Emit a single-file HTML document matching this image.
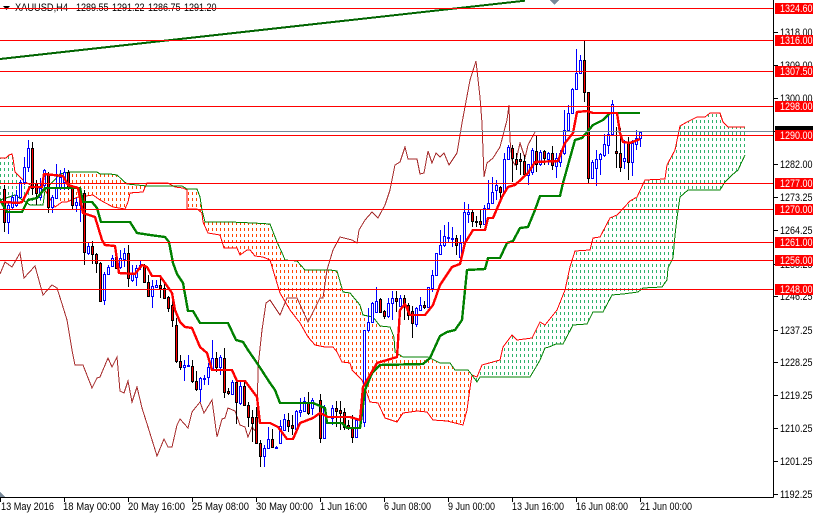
<!DOCTYPE html>
<html><head><meta charset="utf-8"><style>
html,body{margin:0;padding:0;background:#fff;width:814px;height:514px;overflow:hidden}
svg{display:block}
text{font-family:"Liberation Sans",sans-serif;font-size:11px;fill:#000}
</style></head><body>
<svg width="814" height="514" viewBox="0 0 814 514" xmlns="http://www.w3.org/2000/svg">
<defs>
<pattern id="po" width="4" height="6" patternUnits="userSpaceOnUse"><rect x="0" y="0" width="1" height="3" fill="#ff4500"/></pattern>
<pattern id="pg" width="4" height="6" patternUnits="userSpaceOnUse"><rect x="0" y="0" width="1" height="3" fill="#2eb36b"/></pattern>
</defs>
<rect width="814" height="514" fill="#fff"/>
<g shape-rendering="crispEdges">
<!-- cloud fills -->
<polygon fill="url(#pg)" points="0,158 6,158 9,155 12,154 13,158 15,172 17,174 24,181 32,186 45,190 43,205 30,205 15,195 0,200"/>
<polygon fill="url(#po)" points="60,174 70,172 97,172 100,174 110,174 117,175 127,184 147,186 143,192 130,193 128,202 125,209 113,207 100,200 93,195 78,197 67,202 62,202 60,203"/>
<polygon fill="url(#po)" points="187,189 197,189 200,197 202,210 205,222 230,222 253,223 270,224 277,242 283,255 285,260 297,261 305,270 330,270 337,271 343,292 350,293 360,305 363,315 373,317 380,326 390,327 394,337 395,352 403,357 428,357 440,363 450,363 455,370 468,370 472,375 470,388 467,410 463,425 447,421 433,420 427,412 417,411 403,413 397,422 385,418 378,403 370,402 362,380 352,370 350,363 342,362 337,352 333,347 325,347 315,345 308,337 300,323 290,310 280,293 270,260 263,257 255,256 250,250 247,250 240,255 237,248 224,248 220,235 208,233 203,222 202,213 197,209 187,209"/>
<polygon fill="url(#pg)" points="472,375 477,377 482,365 500,360 503,347 512,335 517,340 532,338 537,328 540,322 545,325 557,310 565,290 570,267 575,251 590,250 593,238 600,237 610,218 617,215 630,201 637,197 645,180 665,179 667,165 675,150 680,126 687,122 697,117 705,117 710,113 720,113 723,122 728,127 745,127 745,155 738,170 732,175 725,182 720,190 688,190 680,197 677,218 675,235 673,258 668,268 667,280 662,287 643,288 638,292 623,294 612,295 603,312 593,312 587,324 573,325 563,344 556,344 549,347 545,348 540,360 536,367 530,377 480,377 477,382"/>
<!-- span A -->
<polyline fill="none" stroke="#ff0000" points="0,158 6,158 9,155 12,154 13,158 15,172 17,174 24,181 32,186 45,190 55,207 62,202 67,202 78,197 93,195 100,200 113,207 125,209 128,202 130,193 143,192 147,183 168,183 175,187 183,188 187,190 187,209 197,209 202,213 203,222 208,233 220,235 224,248 237,248 240,255 247,250 250,250 255,256 263,257 270,260 280,293 290,310 300,323 308,337 315,345 325,347 333,347 337,352 342,362 350,363 352,370 362,380 370,402 378,403 385,418 397,422 403,413 417,411 427,412 433,420 447,421 463,425 467,410 470,388 472,375 477,377 482,365 500,360 503,347 512,335 517,340 532,338 537,328 540,322 545,325 557,310 565,290 570,267 575,251 590,250 593,238 600,237 610,218 617,215 630,201 637,197 645,180 665,179 667,165 675,150 680,126 687,122 697,117 705,117 710,113 720,113 723,122 728,127 745,127"/>
<!-- span B -->
<polyline fill="none" stroke="#008000" points="0,200 15,195 30,205 43,205 45,190 60,174 70,172 97,172 100,174 110,174 117,175 127,184 147,186 182,186 187,189 197,189 200,197 202,210 205,222 230,222 253,223 270,224 277,242 283,255 285,260 297,261 305,270 330,270 337,271 343,292 350,293 360,305 363,315 373,317 380,326 390,327 394,337 395,352 403,357 428,357 440,363 450,363 455,370 468,370 472,375 477,382 480,377 530,377 536,367 540,360 545,348 549,347 556,344 563,344 573,325 587,324 593,312 603,312 612,295 623,294 638,292 643,288 662,287 667,280 668,268 673,258 675,235 677,218 680,197 688,190 720,190 725,182 732,175 738,170 745,155"/>
<!-- chikou -->
<polyline fill="none" stroke="#a52a2a" points="0,274 5,262 12,267 20,253 24,278 35,266 43,295 52,285 57,288 63,307 67,320 72,350 75,365 83,365 92,388 97,378 100,377 108,358 112,367 117,357 120,391 124,393 128,381 132,402 137,387 142,408 148,427 157,456 164,439 168,447 172,447 177,425 180,419 188,428 192,412 200,402 204,413 212,400 217,437 222,419 225,418 228,408 235,411 240,425 245,427 248,437 252,427 257,433 258,367 262,330 266,303 270,300 280,315 287,298 297,298 308,322 320,298 323,298 327,270 333,250 340,237 352,240 357,243 359,230 365,220 372,212 378,218 385,205 390,190 395,165 400,162 405,147 408,159 417,159 420,174 424,173 428,151 432,163 436,153 440,157 444,153 449,165 457,153 462,123 470,80 476,61 480,97 482,123 484,177 487,163 493,158 500,147 507,120 509,105 510,140 512,160 515,165 520,143 525,158 528,145 535,132"/>
<!-- bull candles -->
<path fill="none" stroke="#0000ff" d="M8.5 203V234M12.5 195V210M16.5 190V207M20.5 180V198M24.5 157V185M28.5 140V172M40.5 178V200M44.5 169V187M52.5 195V213M56.5 164V198M60.5 170V190M64.5 168V190M76.5 198V212M80.5 190V222M88.5 242V255M104.5 272V305M108.5 265V275M112.5 255V267M120.5 250V269M124.5 248V267M132.5 265V282M136.5 265V286M140.5 261V270M152.5 280V308M156.5 280V288M184.5 360V381M188.5 355V367M200.5 377V402M204.5 375V385M208.5 363V385M212.5 340V370M220.5 355V375M232.5 380V394M240.5 380V405M264.5 445V467M268.5 427V449M276.5 446V448M280.5 420V443M284.5 414V431M296.5 410V430M300.5 398V417M304.5 397V412M312.5 398V415M324.5 405V438M332.5 405V425M356.5 418V437M364.5 330V427M368.5 308V332M372.5 302V323M376.5 287V313M388.5 298V318M392.5 291V320M400.5 295V307M416.5 307V327M420.5 297V311M428.5 287V308M432.5 270V292M436.5 253V276M440.5 230V255M444.5 225V247M448.5 222V242M452.5 227V247M460.5 235V260M464.5 202V245M468.5 204V223M484.5 205V225M488.5 180V210M492.5 177V204M496.5 180V200M504.5 153V194M508.5 145V160M528.5 164V185M532.5 148V175M540.5 150V166M548.5 152V165M556.5 153V178M560.5 150V167M564.5 110V155M568.5 105V131M572.5 88V114M576.5 49V90M580.5 55V73M592.5 160V178M596.5 150V186M600.5 153V175M604.5 134V157M608.5 112V154M612.5 100V135M624.5 140V169M632.5 140V176M636.5 130V150M640.5 131V147"/>
<path fill="#fff" stroke="#0000ff" d="M7.5 205.5h2V222.5h-2zM11.5 197.5h2V207.5h-2zM15.5 195.5h2V205.5h-2zM19.5 182.5h2V197.5h-2zM23.5 167.5h2V182.5h-2zM27.5 148.5h2V167.5h-2zM39.5 188.5h2V197.5h-2zM43.5 170.5h2V185.5h-2zM51.5 197.5h2V207.5h-2zM55.5 187.5h2V198.5h-2zM59.5 177.5h2V187.5h-2zM63.5 172.5h2V182.5h-2zM75.5 202.5h2V205.5h-2zM79.5 197.5h2V205.5h-2zM87.5 246.5h2V253.5h-2zM103.5 274.5h2V300.5h-2zM107.5 267.5h2V274.5h-2zM111.5 258.5h2V266.5h-2zM119.5 258.5h2V267.5h-2zM123.5 253.5h2V259.5h-2zM131.5 273.5h2V280.5h-2zM135.5 268.5h2V277.5h-2zM139.5 265.5h2V266.5h-2zM151.5 286.5h2V296.5h-2zM155.5 285.5h2V287.5h-2zM183.5 365.5h2V367.5h-2zM187.5 365.5h2V366.5h-2zM199.5 378.5h2V389.5h-2zM203.5 378.5h2V379.5h-2zM207.5 367.5h2V377.5h-2zM211.5 358.5h2V368.5h-2zM219.5 357.5h2V367.5h-2zM231.5 382.5h2V394.5h-2zM239.5 386.5h2V403.5h-2zM263.5 448.5h2V456.5h-2zM267.5 439.5h2V448.5h-2zM275.5 447.5h2V448.5h-2zM279.5 426.5h2V443.5h-2zM283.5 419.5h2V430.5h-2zM295.5 411.5h2V429.5h-2zM299.5 410.5h2V412.5h-2zM303.5 401.5h2V411.5h-2zM311.5 400.5h2V408.5h-2zM323.5 408.5h2V438.5h-2zM331.5 408.5h2V418.5h-2zM355.5 420.5h2V437.5h-2zM363.5 330.5h2V422.5h-2zM367.5 322.5h2V330.5h-2zM371.5 303.5h2V322.5h-2zM375.5 301.5h2V312.5h-2zM387.5 303.5h2V316.5h-2zM391.5 298.5h2V303.5h-2zM399.5 298.5h2V306.5h-2zM415.5 308.5h2V324.5h-2zM419.5 305.5h2V310.5h-2zM427.5 287.5h2V307.5h-2zM431.5 275.5h2V288.5h-2zM435.5 253.5h2V275.5h-2zM439.5 245.5h2V254.5h-2zM443.5 236.5h2V245.5h-2zM447.5 237.5h2V238.5h-2zM451.5 238.5h2V239.5h-2zM459.5 243.5h2V257.5h-2zM463.5 212.5h2V243.5h-2zM467.5 212.5h2V214.5h-2zM483.5 208.5h2V224.5h-2zM487.5 203.5h2V208.5h-2zM491.5 192.5h2V203.5h-2zM495.5 185.5h2V190.5h-2zM503.5 159.5h2V192.5h-2zM507.5 147.5h2V159.5h-2zM527.5 164.5h2V175.5h-2zM531.5 150.5h2V172.5h-2zM539.5 152.5h2V164.5h-2zM547.5 153.5h2V159.5h-2zM555.5 158.5h2V166.5h-2zM559.5 153.5h2V162.5h-2zM563.5 130.5h2V153.5h-2zM567.5 113.5h2V130.5h-2zM571.5 89.5h2V113.5h-2zM575.5 73.5h2V89.5h-2zM579.5 60.5h2V73.5h-2zM591.5 162.5h2V178.5h-2zM595.5 159.5h2V168.5h-2zM599.5 154.5h2V159.5h-2zM603.5 144.5h2V155.5h-2zM607.5 134.5h2V145.5h-2zM611.5 104.5h2V134.5h-2zM623.5 158.5h2V161.5h-2zM631.5 143.5h2V162.5h-2zM635.5 138.5h2V144.5h-2zM639.5 132.5h2V138.5h-2z"/>
<!-- bear candles -->
<path fill="none" stroke="#000" d="M4.5 185V232M32.5 142V195M36.5 180V205M48.5 172V213M68.5 170V190M72.5 185V210M84.5 190V265M92.5 241V264M96.5 253V273M100.5 262V302M116.5 252V269M128.5 245V287M144.5 264V283M148.5 275V297M160.5 275V298M164.5 284V298M168.5 296V312M172.5 300V327M176.5 318V363M180.5 355V370M192.5 360V383M196.5 371V391M216.5 352V372M224.5 348V398M228.5 388V395M236.5 380V424M244.5 382V406M248.5 402V427M252.5 410V442M256.5 407V443M260.5 440V467M272.5 429V448M288.5 413V432M292.5 415V435M308.5 392V415M320.5 394V443M336.5 401V427M340.5 401V430M344.5 408V430M348.5 420V430M352.5 415V443M380.5 298V313M384.5 310V319M396.5 291V312M404.5 295V320M408.5 303V320M412.5 306V338M424.5 301V309M456.5 235V255M472.5 210V227M476.5 216V227M480.5 210V228M500.5 186V198M512.5 145V182M516.5 153V170M520.5 153V175M524.5 155V176M536.5 136V172M544.5 150V165M552.5 146V170M584.5 41V102M588.5 92V183M616.5 127V168M620.5 128V172M628.5 137V180"/>
<path fill="#ff0000" stroke="#000" d="M3.5 189.5h2V222.5h-2zM31.5 148.5h2V188.5h-2zM35.5 183.5h2V193.5h-2zM47.5 174.5h2V207.5h-2zM67.5 172.5h2V187.5h-2zM71.5 188.5h2V205.5h-2zM83.5 193.5h2V252.5h-2zM91.5 246.5h2V254.5h-2zM95.5 254.5h2V263.5h-2zM99.5 263.5h2V301.5h-2zM115.5 257.5h2V268.5h-2zM127.5 253.5h2V278.5h-2zM143.5 265.5h2V282.5h-2zM147.5 282.5h2V296.5h-2zM159.5 285.5h2V288.5h-2zM163.5 288.5h2V298.5h-2zM167.5 297.5h2V308.5h-2zM171.5 305.5h2V320.5h-2zM175.5 325.5h2V361.5h-2zM179.5 361.5h2V367.5h-2zM191.5 366.5h2V381.5h-2zM195.5 381.5h2V389.5h-2zM215.5 358.5h2V367.5h-2zM223.5 358.5h2V392.5h-2zM227.5 391.5h2V393.5h-2zM235.5 382.5h2V402.5h-2zM243.5 386.5h2V405.5h-2zM247.5 405.5h2V417.5h-2zM251.5 417.5h2V423.5h-2zM255.5 417.5h2V443.5h-2zM259.5 443.5h2V456.5h-2zM271.5 439.5h2V447.5h-2zM287.5 420.5h2V426.5h-2zM291.5 425.5h2V428.5h-2zM307.5 402.5h2V413.5h-2zM319.5 400.5h2V438.5h-2zM335.5 408.5h2V411.5h-2zM339.5 410.5h2V413.5h-2zM343.5 412.5h2V427.5h-2zM347.5 425.5h2V427.5h-2zM351.5 427.5h2V437.5h-2zM379.5 299.5h2V312.5h-2zM383.5 311.5h2V316.5h-2zM395.5 298.5h2V301.5h-2zM403.5 298.5h2V306.5h-2zM407.5 305.5h2V315.5h-2zM411.5 311.5h2V323.5h-2zM423.5 305.5h2V307.5h-2zM455.5 238.5h2V245.5h-2zM471.5 212.5h2V221.5h-2zM475.5 221.5h2V222.5h-2zM479.5 221.5h2V224.5h-2zM499.5 187.5h2V192.5h-2zM511.5 148.5h2V158.5h-2zM515.5 159.5h2V164.5h-2zM519.5 159.5h2V161.5h-2zM523.5 161.5h2V174.5h-2zM535.5 151.5h2V164.5h-2zM543.5 151.5h2V158.5h-2zM551.5 153.5h2V165.5h-2zM583.5 60.5h2V92.5h-2zM587.5 92.5h2V178.5h-2zM615.5 151.5h2V153.5h-2zM619.5 153.5h2V167.5h-2zM627.5 143.5h2V162.5h-2z"/>
<!-- kijun -->
<polyline fill="none" stroke="#008000" stroke-width="2.4" stroke-linejoin="round" points="0,200 3,205 7,212 22,212 28,200 37,198 42,192 45,188 80,188 83,202 92,202 97,208 101,222 130,222 137,233 150,235 165,237 169,242 173,263 177,274 183,283 188,311 193,311 200,323 228,323 236,340 243,342 248,350 257,363 270,383 275,390 280,403 313,403 325,408 327,423 342,423 347,428 360,428 365,390 372,373 380,365 423,364 430,358 440,336 447,332 455,330 462,320 467,270 485,269 488,258 500,258 507,243 513,241 520,228 528,227 535,210 540,196 560,196 563,183 575,140 582,138 593,125 603,120 610,113 640,113"/>
<!-- tenkan -->
<polyline fill="none" stroke="#ff0000" stroke-width="2.4" stroke-linejoin="round" points="0,202 5,202 18,203 22,202 30,187 42,187 44,174 63,176 68,185 78,188 83,213 95,217 102,240 105,245 115,246 119,273 135,274 142,265 147,267 152,276 160,276 165,283 172,293 175,310 180,322 185,327 192,328 200,347 207,353 212,370 232,370 237,381 245,381 257,397 260,423 270,423 278,427 287,439 293,439 300,423 313,418 320,413 328,417 350,417 360,420 363,387 377,363 397,357 400,310 405,304 410,315 425,315 433,305 440,285 450,270 452,267 460,264 465,243 473,230 485,230 488,218 493,218 502,197 508,187 515,185 528,173 535,162 558,161 565,143 573,133 577,112 587,111 593,113 617,113 620,133 623,142 630,143 640,139"/>
<!-- trendline -->
<polyline fill="none" stroke="#006400" stroke-width="2" points="0,59 270,29 525,0.7"/>
</g>
<!-- header text -->
<polygon points="3,6 10,6 6.5,10" fill="#000"/>
<text x="15" y="11" textLength="53" lengthAdjust="spacingAndGlyphs">XAUUSD,H4</text>
<text x="76" y="11" textLength="32.5" lengthAdjust="spacingAndGlyphs">1289.55</text>
<text x="112" y="11" textLength="32.5" lengthAdjust="spacingAndGlyphs">1291.22</text>
<text x="148" y="11" textLength="32.5" lengthAdjust="spacingAndGlyphs">1286.75</text>
<text x="184" y="11" textLength="32.5" lengthAdjust="spacingAndGlyphs">1291.20</text>
<!-- axis labels -->
<g>
<text x="780" y="36" textLength="32.5" lengthAdjust="spacingAndGlyphs">1318.00</text>
<text x="780" y="69" textLength="32.5" lengthAdjust="spacingAndGlyphs">1309.00</text>
<text x="780" y="102" textLength="32.5" lengthAdjust="spacingAndGlyphs">1300.00</text>
<text x="780" y="168" textLength="32.5" lengthAdjust="spacingAndGlyphs">1282.00</text>
<text x="780" y="201" textLength="32.5" lengthAdjust="spacingAndGlyphs">1273.25</text>
<text x="780" y="234" textLength="32.5" lengthAdjust="spacingAndGlyphs">1264.25</text>
<text x="780" y="268" textLength="32.5" lengthAdjust="spacingAndGlyphs">1255.25</text>
<text x="780" y="300" textLength="32.5" lengthAdjust="spacingAndGlyphs">1246.25</text>
<text x="780" y="334" textLength="32.5" lengthAdjust="spacingAndGlyphs">1237.25</text>
<text x="780" y="366" textLength="32.5" lengthAdjust="spacingAndGlyphs">1228.25</text>
<text x="780" y="399" textLength="32.5" lengthAdjust="spacingAndGlyphs">1219.25</text>
<text x="780" y="432" textLength="32.5" lengthAdjust="spacingAndGlyphs">1210.25</text>
<text x="780" y="465" textLength="32.5" lengthAdjust="spacingAndGlyphs">1201.25</text>
<text x="780" y="498" textLength="32.5" lengthAdjust="spacingAndGlyphs">1192.25</text>
</g>
<g shape-rendering="crispEdges">
<path fill="none" stroke="#000" d="M773.5 0V497.5M0 497.5H773.5M774 32.5h4M774 65.5h4M774 98.5h4M774 131.5h4M774 164.5h4M774 197.5h4M774 230.5h4M774 264.5h4M774 296.5h4M774 330.5h4M774 362.5h4M774 395.5h4M774 428.5h4M774 461.5h4M774 494.5h4M0.5 497V502M64.5 497V502M128.5 497V502M192.5 497V502M256.5 497V502M320.5 497V502M384.5 497V502M448.5 497V502M512.5 497V502M576.5 497V502M640.5 497V502"/>
<!-- bid tag -->
<rect x="775" y="126" width="38" height="11" fill="#000"/>
<!-- horizontal lines -->
<path fill="none" stroke="#778899" d="M0 131.5H773"/>
<path fill="none" stroke="#ff0000" d="M0 8.5H773M0 40.5H773M0 71.5H773M0 106.5H773M0 135.5H773M0 183.5H773M0 209.5H773M0 242.5H773M0 260.5H773M0 289.5H773"/>
<!-- tags -->
<g fill="#ff0000">
<rect x="775" y="3" width="38" height="11"/><rect x="775" y="35" width="38" height="11"/><rect x="775" y="66" width="38" height="11"/><rect x="775" y="101" width="38" height="11"/><rect x="775" y="130" width="38" height="11"/><rect x="775" y="178" width="38" height="11"/><rect x="775" y="204" width="38" height="11"/><rect x="775" y="237" width="38" height="11"/><rect x="775" y="255" width="38" height="11"/><rect x="775" y="284" width="38" height="11"/>
</g>
<polygon points="550,0 559,0 554.5,5" fill="#778899"/>
<polygon points="0,492 5,497 0,497" fill="#778899"/>
</g>
<g style="fill:#fff">
<text style="fill:#fff" x="780" y="12" textLength="32.5" lengthAdjust="spacingAndGlyphs">1324.60</text>
<text style="fill:#fff" x="780" y="44" textLength="32.5" lengthAdjust="spacingAndGlyphs">1316.00</text>
<text style="fill:#fff" x="780" y="75" textLength="32.5" lengthAdjust="spacingAndGlyphs">1307.50</text>
<text style="fill:#fff" x="780" y="110" textLength="32.5" lengthAdjust="spacingAndGlyphs">1298.00</text>
<text style="fill:#fff" x="780" y="139" textLength="32.5" lengthAdjust="spacingAndGlyphs">1290.00</text>
<text style="fill:#fff" x="780" y="187" textLength="32.5" lengthAdjust="spacingAndGlyphs">1277.00</text>
<text style="fill:#fff" x="780" y="213" textLength="32.5" lengthAdjust="spacingAndGlyphs">1270.00</text>
<text style="fill:#fff" x="780" y="246" textLength="32.5" lengthAdjust="spacingAndGlyphs">1261.00</text>
<text style="fill:#fff" x="780" y="264" textLength="32.5" lengthAdjust="spacingAndGlyphs">1256.00</text>
<text style="fill:#fff" x="780" y="293" textLength="32.5" lengthAdjust="spacingAndGlyphs">1248.00</text>
</g>
<!-- time labels -->
<text x="1" y="510" textLength="53" lengthAdjust="spacingAndGlyphs">13 May 2016</text>
<text x="63" y="510" textLength="57.5" lengthAdjust="spacingAndGlyphs">18 May 00:00</text>
<text x="128" y="510" textLength="57" lengthAdjust="spacingAndGlyphs">20 May 16:00</text>
<text x="192" y="510" textLength="57" lengthAdjust="spacingAndGlyphs">25 May 08:00</text>
<text x="256" y="510" textLength="57" lengthAdjust="spacingAndGlyphs">30 May 00:00</text>
<text x="320" y="510" textLength="47" lengthAdjust="spacingAndGlyphs">1 Jun 16:00</text>
<text x="384" y="510" textLength="47" lengthAdjust="spacingAndGlyphs">6 Jun 08:00</text>
<text x="448" y="510" textLength="47" lengthAdjust="spacingAndGlyphs">9 Jun 00:00</text>
<text x="512" y="510" textLength="52" lengthAdjust="spacingAndGlyphs">13 Jun 16:00</text>
<text x="576" y="510" textLength="52" lengthAdjust="spacingAndGlyphs">16 Jun 08:00</text>
<text x="640" y="510" textLength="52" lengthAdjust="spacingAndGlyphs">21 Jun 00:00</text>
</svg>
</body></html>
